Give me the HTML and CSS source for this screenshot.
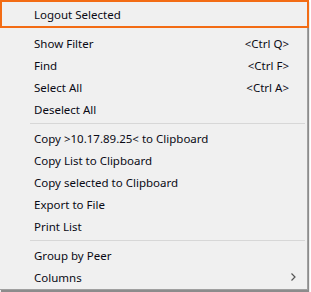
FILE: index.html
```html
<!DOCTYPE html>
<html>
<head>
<meta charset="utf-8">
<link rel="stylesheet" href="styles.css">
</head>
<body>
<div class="menu">
  <div class="item highlight"><span class="label">Logout Selected</span></div>
  <div class="gap"></div>
  <div class="item"><span class="label">Show Filter</span><span class="key">&lt;Ctrl Q&gt;</span></div>
  <div class="item"><span class="label">Find</span><span class="key">&lt;Ctrl F&gt;</span></div>
  <div class="item"><span class="label">Select All</span><span class="key">&lt;Ctrl A&gt;</span></div>
  <div class="item"><span class="label">Deselect All</span></div>
  <div class="sep"></div>
  <div class="item"><span class="label">Copy &gt;10.17.89.25&lt; to Clipboard</span></div>
  <div class="item"><span class="label">Copy List to Clipboard</span></div>
  <div class="item"><span class="label">Copy selected to Clipboard</span></div>
  <div class="item"><span class="label">Export to File</span></div>
  <div class="item"><span class="label">Print List</span></div>
  <div class="sep"></div>
  <div class="item"><span class="label">Group by Peer</span></div>
  <div class="item"><span class="label">Columns</span>
    <svg class="arrow" width="5" height="8" viewBox="0 0 5 8"><path d="M0.5 0.5 L4 4 L0.5 7.5" fill="none" stroke="#555" stroke-width="1.2"/></svg>
  </div>
</div>
</body>
</html>
```
FILE: styles.css
```css
html, body {
  margin: 0;
  padding: 0;
  background: #ffffff;
}
body {
  width: 311px;
  height: 292px;
  overflow: hidden;
  font-family: "Noto Sans", "Segoe UI", sans-serif;
  font-size: 11.5px;
  color: #0a0a14;
}
.menu {
  width: 307px;
  height: 289px;
  background: #f0f0f0;
  border-right: 1px solid #a0a0a0;
  border-bottom: 1px solid #a0a0a0;
  box-shadow: 1px 2px 1px rgba(0,0,0,0.45);
  display: flex;
  flex-direction: column;
}
.item {
  height: 22px;
  display: flex;
  align-items: center;
  padding-left: 34px;
  padding-right: 18px;
  box-sizing: border-box;
}
.item .label {
  flex: 1;
  white-space: nowrap;
}
.item .key {
  white-space: nowrap;
}
.highlight {
  height: 28px;
  width: 309px;
  border: 2px solid #f36c14;
  padding-left: 32px;
}
.gap {
  height: 4px;
}
.sep {
  height: 7px;
  display: flex;
  align-items: center;
  padding-left: 30px;
  padding-right: 2px;
}
.sep::before {
  content: "";
  flex: 1;
  height: 1px;
  background: #d7d7d7;
}
.arrow {
  margin-right: -7px;
}
```
